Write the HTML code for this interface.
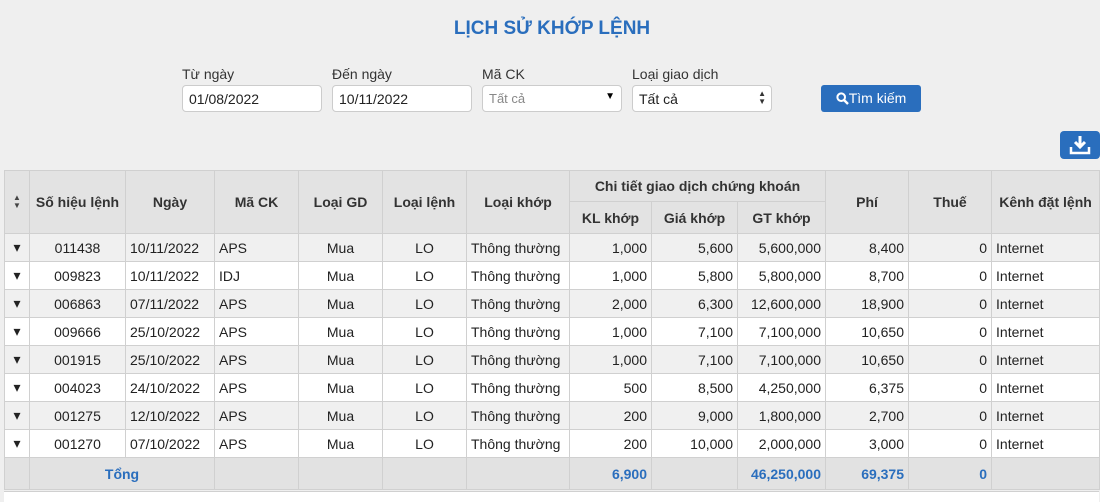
<!DOCTYPE html>
<html><head><meta charset="utf-8"><style>
body{margin:0;width:1100px;height:497px;background:#efefef;font-family:"Liberation Sans",sans-serif;font-size:14px;color:#222;position:relative;overflow:hidden}
.t{position:absolute;top:18px;left:0;width:1104px;text-align:center;color:#2a6ebd;font-weight:bold;font-size:19px}
.lb{position:absolute;top:66px;font-size:14px;color:#333}
.in{position:absolute;top:85px;width:140px;height:27px;background:#fff;border:1px solid #ccc;border-radius:4px;box-sizing:border-box;padding:5px 6px;font-size:14px}
.btn{position:absolute;left:821px;top:85px;width:100px;height:27px;background:#2a6ebd;border-radius:3px;color:#fff;font-size:14px;line-height:27px;text-align:center}
.dl{position:absolute;left:1060px;top:131px;width:40px;height:28px;background:#2a6ebd;border-radius:4px}
table{position:absolute;left:4px;top:170px;width:1095px;border-collapse:collapse;table-layout:fixed}
td,th{border:1px solid #d0d0d0;height:27px;padding:0 4px;white-space:nowrap}
th{background:#e3e3e3;font-weight:bold;color:#333}
tr.o td{background:#f0f0f0}tr.e td{background:#fff}
.r{text-align:right}.c{text-align:center}
tr.s td{background:#e2e2e2;color:#2a6ebd;font-weight:bold;height:31px}
.bot{position:absolute;left:4px;top:491px;width:1095px;height:10px;background:#fff;border-top:1px solid #d0d0d0}
</style></head><body>
<div class="t">LỊCH SỬ KHỚP LỆNH</div>
<div class="lb" style="left:182px">Từ ngày</div><div class="lb" style="left:332px">Đến ngày</div><div class="lb" style="left:482px">Mã CK</div><div class="lb" style="left:632px">Loại giao dịch</div>
<div class="in" style="left:182px">01/08/2022</div>
<div class="in" style="left:332px">10/11/2022</div>
<div class="in" style="left:482px;color:#888;font-size:13px">Tất cả<span style="position:absolute;right:6px;top:5px;color:#000;font-size:10px">▼</span></div>
<div class="in" style="left:632px">Tất cả<span style="position:absolute;right:5px;top:4px;color:#333;font-size:8px;line-height:8px">▲<br>▼</span></div>
<div class="btn"><svg width="13" height="13" viewBox="0 0 13 13" style="vertical-align:-2px"><circle cx="5.2" cy="5.2" r="3.8" fill="none" stroke="#fff" stroke-width="2"/><path d="M8 8l4 4" stroke="#fff" stroke-width="2.4"/></svg>Tìm kiếm</div>
<div class="dl"><svg width="40" height="28" viewBox="0 0 40 28"><path d="M20 5v10M15 11l5 5 5-5" stroke="#fff" stroke-width="3" fill="none"/><path d="M11 16v6h18v-6" stroke="#fff" stroke-width="2.5" fill="none"/></svg></div>
<table>
<colgroup><col style="width:25px"><col style="width:96px"><col style="width:89px"><col style="width:84px"><col style="width:84px"><col style="width:84px"><col style="width:103px"><col style="width:82px"><col style="width:86px"><col style="width:88px"><col style="width:83px"><col style="width:83px"><col style="width:108px"></colgroup>
<tr><th rowspan="2" style="height:62px;font-size:8px;line-height:8px;color:#444">▲<br>▼</th><th rowspan="2">Số hiệu lệnh</th><th rowspan="2">Ngày</th><th rowspan="2">Mã CK</th><th rowspan="2">Loại GD</th><th rowspan="2">Loại lệnh</th><th rowspan="2">Loại khớp</th><th colspan="3" style="height:30px">Chi tiết giao dịch chứng khoán</th><th rowspan="2">Phí</th><th rowspan="2">Thuế</th><th rowspan="2">Kênh đặt lệnh</th></tr>
<tr><th style="height:31px">KL khớp</th><th>Giá khớp</th><th>GT khớp</th></tr>
<tr class="o"><td class="c">▾</td><td class="c">011438</td><td>10/11/2022</td><td>APS</td><td class="c">Mua</td><td class="c">LO</td><td>Thông thường</td><td class="r">1,000</td><td class="r">5,600</td><td class="r">5,600,000</td><td class="r">8,400</td><td class="r">0</td><td>Internet</td></tr>
<tr class="e"><td class="c">▾</td><td class="c">009823</td><td>10/11/2022</td><td>IDJ</td><td class="c">Mua</td><td class="c">LO</td><td>Thông thường</td><td class="r">1,000</td><td class="r">5,800</td><td class="r">5,800,000</td><td class="r">8,700</td><td class="r">0</td><td>Internet</td></tr>
<tr class="o"><td class="c">▾</td><td class="c">006863</td><td>07/11/2022</td><td>APS</td><td class="c">Mua</td><td class="c">LO</td><td>Thông thường</td><td class="r">2,000</td><td class="r">6,300</td><td class="r">12,600,000</td><td class="r">18,900</td><td class="r">0</td><td>Internet</td></tr>
<tr class="e"><td class="c">▾</td><td class="c">009666</td><td>25/10/2022</td><td>APS</td><td class="c">Mua</td><td class="c">LO</td><td>Thông thường</td><td class="r">1,000</td><td class="r">7,100</td><td class="r">7,100,000</td><td class="r">10,650</td><td class="r">0</td><td>Internet</td></tr>
<tr class="o"><td class="c">▾</td><td class="c">001915</td><td>25/10/2022</td><td>APS</td><td class="c">Mua</td><td class="c">LO</td><td>Thông thường</td><td class="r">1,000</td><td class="r">7,100</td><td class="r">7,100,000</td><td class="r">10,650</td><td class="r">0</td><td>Internet</td></tr>
<tr class="e"><td class="c">▾</td><td class="c">004023</td><td>24/10/2022</td><td>APS</td><td class="c">Mua</td><td class="c">LO</td><td>Thông thường</td><td class="r">500</td><td class="r">8,500</td><td class="r">4,250,000</td><td class="r">6,375</td><td class="r">0</td><td>Internet</td></tr>
<tr class="o"><td class="c">▾</td><td class="c">001275</td><td>12/10/2022</td><td>APS</td><td class="c">Mua</td><td class="c">LO</td><td>Thông thường</td><td class="r">200</td><td class="r">9,000</td><td class="r">1,800,000</td><td class="r">2,700</td><td class="r">0</td><td>Internet</td></tr>
<tr class="e"><td class="c">▾</td><td class="c">001270</td><td>07/10/2022</td><td>APS</td><td class="c">Mua</td><td class="c">LO</td><td>Thông thường</td><td class="r">200</td><td class="r">10,000</td><td class="r">2,000,000</td><td class="r">3,000</td><td class="r">0</td><td>Internet</td></tr>
<tr class="s"><td></td><td colspan="2" class="c">Tổng</td><td></td><td></td><td></td><td></td><td class="r">6,900</td><td></td><td class="r">46,250,000</td><td class="r">69,375</td><td class="r">0</td><td></td></tr>
</table>
<div class="bot"></div>
</body></html>
